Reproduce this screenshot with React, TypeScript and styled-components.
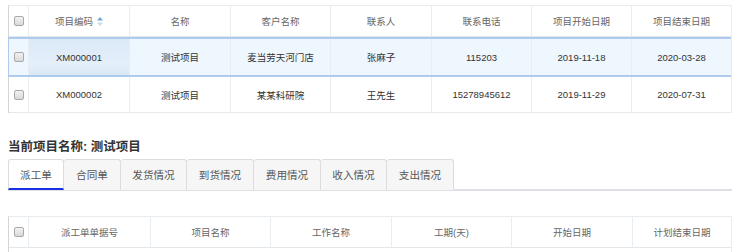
import styled, { createGlobalStyle } from "styled-components";

const GlobalStyle = createGlobalStyle`
  html, body {
    margin: 0;
    padding: 0;
    background: #ffffff;
  }
  body {
    font-family: "Liberation Sans", "Noto Sans CJK SC", sans-serif;
    color: #333333;
  }
`;

const Page = styled.div`
  width: 740px;
  height: 252px;
  overflow: hidden;
  box-sizing: border-box;
  padding: 5px 8px 0;
`;

const Grid = styled.div<{ cols: string }>`
  border-left: 1px solid #d2d6db;
  border-right: 1px solid #e8ebef;
  border-top: 1px solid #e8ebef;
  & > div {
    grid-template-columns: ${({ cols }) => cols};
  }
`;

const HeadRow = styled.div`
  display: grid;
  height: 31px;
  border-bottom: 1px solid #e3e7ec;
  box-sizing: border-box;
`;

const Row = styled.div<{ selected?: boolean; h: number }>`
  display: grid;
  height: ${({ h }) => h}px;
  box-sizing: content-box;
  background: ${({ selected }) => (selected ? "#eef6fe" : "#ffffff")};
  border-top: ${({ selected }) => (selected ? "2px solid #aecbef" : "none")};
  border-bottom: ${({ selected }) =>
    selected ? "2px solid #aecbef" : "1px solid #e6e9ed"};
  margin-left: ${({ selected }) => (selected ? "-1px" : "0")};
  border-left: ${({ selected }) => (selected ? "1px solid #aecbef" : "none")};
`;

const Cell = styled.div<{ head?: boolean; sorted?: boolean }>`
  display: flex;
  align-items: center;
  justify-content: center;
  border-right: 1px solid #e8edf2;
  font-size: 9.5px;
  color: ${({ head }) => (head ? "#666666" : "#333333")};
  white-space: nowrap;
  overflow: hidden;
  background: ${({ sorted }) =>
    sorted ? "linear-gradient(#dbe9f7, #e4effa 70%, #d9e8f6)" : "transparent"};
  &:last-child {
    border-right: none;
  }
`;

const Check = styled.span`
  display: inline-block;
  width: 10px;
  height: 10px;
  box-sizing: border-box;
  border: 1px solid #a9a9a9;
  border-radius: 2px;
  background: linear-gradient(#f2f2f2, #d9d9d9);
`;

const SortIcon = styled.svg`
  margin-left: 4px;
`;

const Title = styled.div`
  margin-top: 26px;
  height: 16px;
  line-height: 16px;
  font-size: 12.5px;
  font-weight: bold;
  color: #333333;
`;

const TabBar = styled.div`
  display: flex;
  margin-top: 4px;
  border-bottom: 2px solid #dde1e6;
`;

const Tab = styled.div<{ active?: boolean; w: number }>`
  width: ${({ w }) => w}px;
  height: 31px;
  margin-bottom: -1px;
  box-sizing: border-box;
  display: flex;
  align-items: center;
  justify-content: center;
  font-size: 10.6px;
  color: #555555;
  border: 1px solid #dcdcdc;
  border-left-width: ${({ active }) => (active ? "1px" : "0")};
  border-bottom: ${({ active }) =>
    active ? "2px solid #1b2fe4" : "1px solid transparent"};
  border-radius: 3px 3px 0 0;
  background: ${({ active }) => (active ? "#ffffff" : "#f6f6f6")};
`;

const Gap = styled.div`
  height: 25px;
`;

const EmptyBody = styled.div`
  height: 20px;
`;

const topCols = "20px 101px 101px 100px 101px 100px 100px 1fr";
const subCols = "20px 122px 120px 121px 120px 121px 1fr";

const projects = [
  ["XM000001", "测试项目", "麦当劳天河门店", "张麻子", "115203", "2019-11-18", "2020-03-28"],
  ["XM000002", "测试项目", "某某科研院", "王先生", "15278945612", "2019-11-29", "2020-07-31"],
];

const tabs: [string, number][] = [
  ["派工单", 56],
  ["合同单", 57],
  ["发货情况", 66],
  ["到货情况", 67],
  ["费用情况", 67],
  ["收入情况", 66],
  ["支出情况", 67],
];

export default function App() {
  return (
    <Page>
      <GlobalStyle />
      <Grid cols={topCols}>
        <HeadRow>
          <Cell head>
            <Check />
          </Cell>
          <Cell head>
            项目编码
            <SortIcon width="6" height="9" viewBox="0 0 6 9">
              <path d="M3 0 L6 3.5 L0 3.5 Z" fill="#6aa6de" />
              <path d="M3 9 L6 5.5 L0 5.5 Z" fill="#c9dcef" />
            </SortIcon>
          </Cell>
          <Cell head>名称</Cell>
          <Cell head>客户名称</Cell>
          <Cell head>联系人</Cell>
          <Cell head>联系电话</Cell>
          <Cell head>项目开始日期</Cell>
          <Cell head>项目结束日期</Cell>
        </HeadRow>
        {projects.map((p, i) => (
          <Row key={p[0]} selected={i === 0} h={i === 0 ? 36 : 35}>
            <Cell>
              <Check />
            </Cell>
            {p.map((v, j) => (
              <Cell key={j} sorted={i === 0 && j === 0}>
                {v}
              </Cell>
            ))}
          </Row>
        ))}
      </Grid>

      <Title>当前项目名称: 测试项目</Title>
      <TabBar>
        {tabs.map(([label, w], i) => (
          <Tab key={label} active={i === 0} w={w}>
            {label}
          </Tab>
        ))}
      </TabBar>

      <Gap />
      <Grid cols={subCols}>
        <HeadRow>
          <Cell head>
            <Check />
          </Cell>
          <Cell head>派工单单据号</Cell>
          <Cell head>项目名称</Cell>
          <Cell head>工作名称</Cell>
          <Cell head>工期(天)</Cell>
          <Cell head>开始日期</Cell>
          <Cell head>计划结束日期</Cell>
        </HeadRow>
        <EmptyBody />
      </Grid>
    </Page>
  );
}
